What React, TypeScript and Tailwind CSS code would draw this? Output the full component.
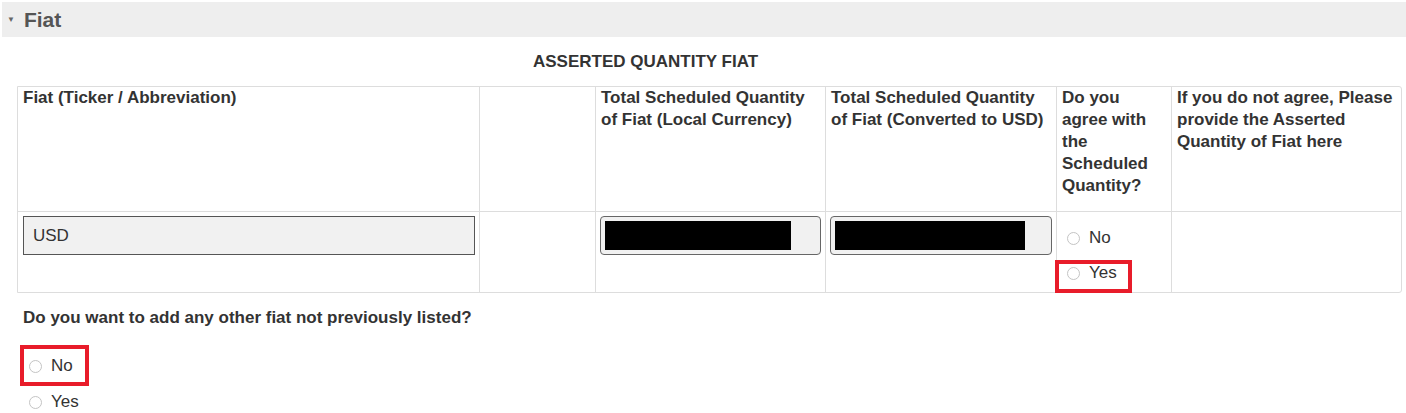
import React from "react";

const headers = [
  "Fiat (Ticker / Abbreviation)",
  "",
  "Total Scheduled Quantity of Fiat (Local Currency)",
  "Total Scheduled Quantity of Fiat (Converted to USD)",
  "Do you agree with the Scheduled Quantity?",
  "If you do not agree, Please provide the Asserted Quantity of Fiat here",
];

const Radio = ({ label }: { label: string }) => (
  <span className="flex items-center gap-[9px] h-[24px]">
    <span className="block w-[13px] h-[13px] rounded-full border border-[#c4c4c4] bg-white" />
    <span className="text-[17px] text-[#333]">{label}</span>
  </span>
);

const Redacted = ({ bar }: { bar: string }) => (
  <div className="h-[39px] rounded-[4px] border border-[#666] bg-[#f1f1f1] flex items-center pl-[4px]">
    <div className={`h-[29px] bg-black ${bar}`} />
  </div>
);

export default function App() {
  return (
    <div className="w-[1406px] h-[413px] overflow-hidden bg-white font-['Liberation_Sans',Arial,sans-serif] text-[#333] pt-[2px]">
      {/* section bar */}
      <div className="ml-[2px] h-[35px] bg-[#eeeeee] flex items-center">
        <span className="ml-[5px] text-[8px] text-[#666]">▼</span>
        <span className="ml-[9px] text-[21px] font-bold text-[#555]">Fiat</span>
      </div>

      <div className="px-[17px]">
        <div className="h-[49px] flex items-center pl-[516px] text-[17px] font-bold">
          ASSERTED QUANTITY FIAT
        </div>

        {/* table */}
        <div className="w-[1385px] border border-[#dddddd] rounded-r-[3px]">
          <div className="grid grid-cols-[461px_116px_230px_231px_115px_230px] h-[124px]">
            {headers.map((h, i) => (
              <div
                key={i}
                className={`px-[5px] text-[17px] font-bold leading-[22px] ${i > 0 ? "border-l border-[#dddddd]" : ""}`}
              >
                {h}
              </div>
            ))}
          </div>
          <div className="grid grid-cols-[461px_116px_230px_231px_115px_230px] h-[81px] border-t border-[#dddddd]">
            <div className="pl-[5px] pr-[4px] pt-[4px]">
              <div className="h-[39px] border border-[#555] bg-[#f1f1f1] flex items-center pl-[9px] text-[17px] text-[#333]">
                USD
              </div>
            </div>
            <div className="border-l border-[#dddddd]" />
            <div className="border-l border-[#dddddd] px-[4px] pt-[4px]">
              <Redacted bar="w-[186px]" />
            </div>
            <div className="border-l border-[#dddddd] px-[4px] pt-[4px]">
              <Redacted bar="w-[190px]" />
            </div>
            <div className="relative border-l border-[#dddddd] pt-[14px] pl-[10px]">
              <Radio label="No" />
              <div className="mt-[11px]">
                <Radio label="Yes" />
              </div>
              <div className="absolute left-[-2px] top-[48px] w-[77px] h-[33px] border-[4px] border-[#e81c2a]" />
            </div>
            <div className="border-l border-[#dddddd]" />
          </div>
        </div>

        <div className="mt-[15px] pl-[6px] text-[17px] leading-[20px] font-bold">
          Do you want to add any other fiat not previously listed?
        </div>

        <div className="mt-[26px] pl-[12px] relative">
          <Radio label="No" />
          <div className="mt-[12px]">
            <Radio label="Yes" />
          </div>
          <div className="absolute left-[3px] top-[-9px] w-[69px] h-[41px] border-[4px] border-[#e81c2a]" />
        </div>
      </div>
    </div>
  );
}
